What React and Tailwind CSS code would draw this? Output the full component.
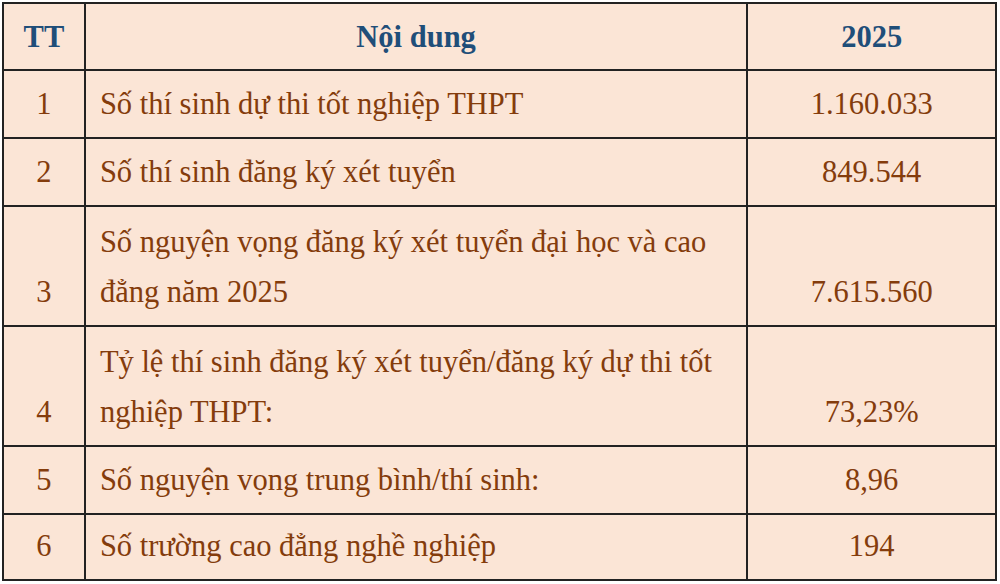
import React from 'react';

const rows = [
    { tt: '1', lines: ['Số thí sinh dự thi tốt nghiệp THPT'], value: '1.160.033', h: 'h-[68px]' },
    { tt: '2', lines: ['Số thí sinh đăng ký xét tuyển'], value: '849.544', h: 'h-[68px]' },
    { tt: '3', lines: ['Số nguyện vọng đăng ký xét tuyển đại học và cao', 'đẳng năm 2025'], value: '7.615.560', h: 'h-[120px]' },
    { tt: '4', lines: ['Tỷ lệ thí sinh đăng ký xét tuyển/đăng ký dự thi tốt', 'nghiệp THPT:'], value: '73,23%', h: 'h-[120px]' },
    { tt: '5', lines: ['Số nguyện vọng trung bình/thí sinh:'], value: '8,96', h: 'h-[68px]' },
    { tt: '6', lines: ['Số trường cao đẳng nghề nghiệp'], value: '194', h: 'h-[66px]' },
];

const App = () => {
    return (
        <div className="w-[1000px] h-[584px] bg-white pt-[2px] pl-[2px] font-[family-name:'Liberation_Serif',serif]">
            <table className="w-[995px] border-collapse bg-[#fbe5d6] text-[30.5px] leading-[50px]">
                <colgroup>
                    <col className="w-[82px]" />
                    <col className="w-[664px]" />
                    <col className="w-[249px]" />
                </colgroup>
                <thead>
                    <tr className="h-[67px] text-[#1f4e79] font-bold">
                        <th className="border-2 border-[#222] text-center align-middle">TT</th>
                        <th className="border-2 border-[#222] text-center align-middle">Nội dung</th>
                        <th className="border-2 border-[#222] text-center align-middle">2025</th>
                    </tr>
                </thead>
                <tbody className="text-[#843c0c]">
                    {rows.map((r) => (
                        <tr key={r.tt} className={r.h}>
                            <td className="border-2 border-[#222] text-center align-bottom pb-[8px]">{r.tt}</td>
                            <td className="border-2 border-[#222] text-left align-bottom pb-[8px] pl-[14px]">
                                {r.lines.map((l, i) => (
                                    <div key={i}>{l}</div>
                                ))}
                            </td>
                            <td className="border-2 border-[#222] text-center align-bottom pb-[8px]">{r.value}</td>
                        </tr>
                    ))}
                </tbody>
            </table>
        </div>
    );
};

export default App;
